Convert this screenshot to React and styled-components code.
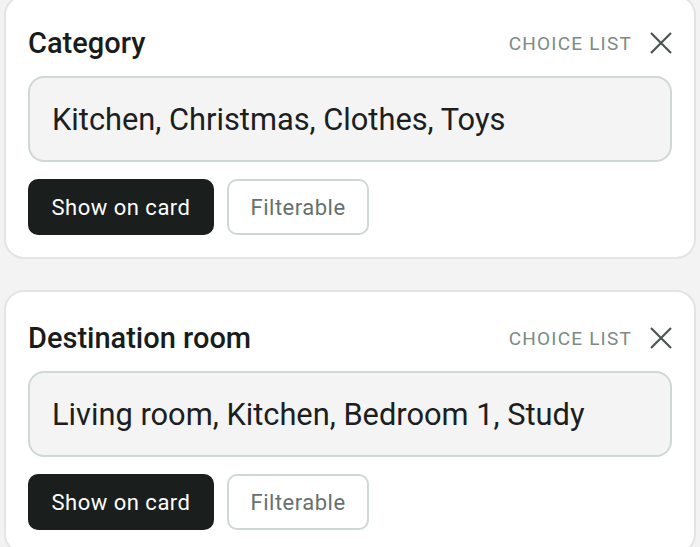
import styled, { createGlobalStyle } from "styled-components";

const GlobalStyle = createGlobalStyle`
  body {
    margin: 0;
    background-color: #f2f3f2;
    font-family: Roboto, "Liberation Sans", sans-serif;
  }
`;

const Page = styled.div`
  display: flex;
  flex-direction: column;
  gap: 31px;
  padding: 0 4px;
  margin-top: -5px;
`;

const Card = styled.div`
  background-color: #ffffff;
  border: 2px solid #e1e5e3;
  border-radius: 20px;
  padding: 26px 22px 22px 22px;
`;

const Header = styled.div`
  display: flex;
  align-items: center;
  justify-content: space-between;
  height: 40px;
  margin-bottom: 13px;
`;

const Title = styled.div`
  font-size: 29px;
  font-weight: 500;
  color: #181d1c;
`;

const TypeRow = styled.div`
  display: flex;
  align-items: center;
  gap: 18px;
`;

const TypeLabel = styled.span`
  font-size: 19px;
  letter-spacing: 1.2px;
  color: #7d8a86;
`;

const CloseIcon = styled.svg`
  width: 22px;
  height: 22px;
  color: #4b5552;
  display: block;
`;

const ValueBox = styled.div`
  display: flex;
  align-items: center;
  height: 86px;
  box-sizing: border-box;
  padding: 0 22px;
  background-color: #f3f4f3;
  border: 2px solid #cfd8d4;
  border-radius: 16px;
  font-size: 30.8px;
  color: #1b201f;
`;

const Buttons = styled.div`
  display: flex;
  gap: 13px;
  margin-top: 17px;
`;

const Toggle = styled.button`
  height: 56px;
  box-sizing: border-box;
  padding: 0 21.5px;
  border-radius: 10px;
  font-family: inherit;
  font-size: 22px;
  letter-spacing: 0.5px;
  border: 2px solid ${(p) => (p.$on ? "#1a1f1e" : "#cfd8d4")};
  background-color: ${(p) => (p.$on ? "#1a1f1e" : "#ffffff")};
  color: ${(p) => (p.$on ? "#ffffff" : "#65716e")};
`;

const fields = [
  { name: "Category", values: "Kitchen, Christmas, Clothes, Toys" },
  { name: "Destination room", values: "Living room, Kitchen, Bedroom 1, Study" },
];

const FieldCard = ({ field }) => (
  <Card>
    <Header>
      <Title>{field.name}</Title>
      <TypeRow>
        <TypeLabel>CHOICE LIST</TypeLabel>
        <CloseIcon viewBox="0 0 22 22">
          <path d="M1 1 L21 21 M21 1 L1 21" stroke="currentColor" strokeWidth="2.2" fill="none" />
        </CloseIcon>
      </TypeRow>
    </Header>
    <ValueBox>{field.values}</ValueBox>
    <Buttons>
      <Toggle $on>Show on card</Toggle>
      <Toggle>Filterable</Toggle>
    </Buttons>
  </Card>
);

export default function App() {
  return (
    <>
      <GlobalStyle />
      <Page>
        {fields.map((f) => (
          <FieldCard key={f.name} field={f} />
        ))}
      </Page>
    </>
  );
}
